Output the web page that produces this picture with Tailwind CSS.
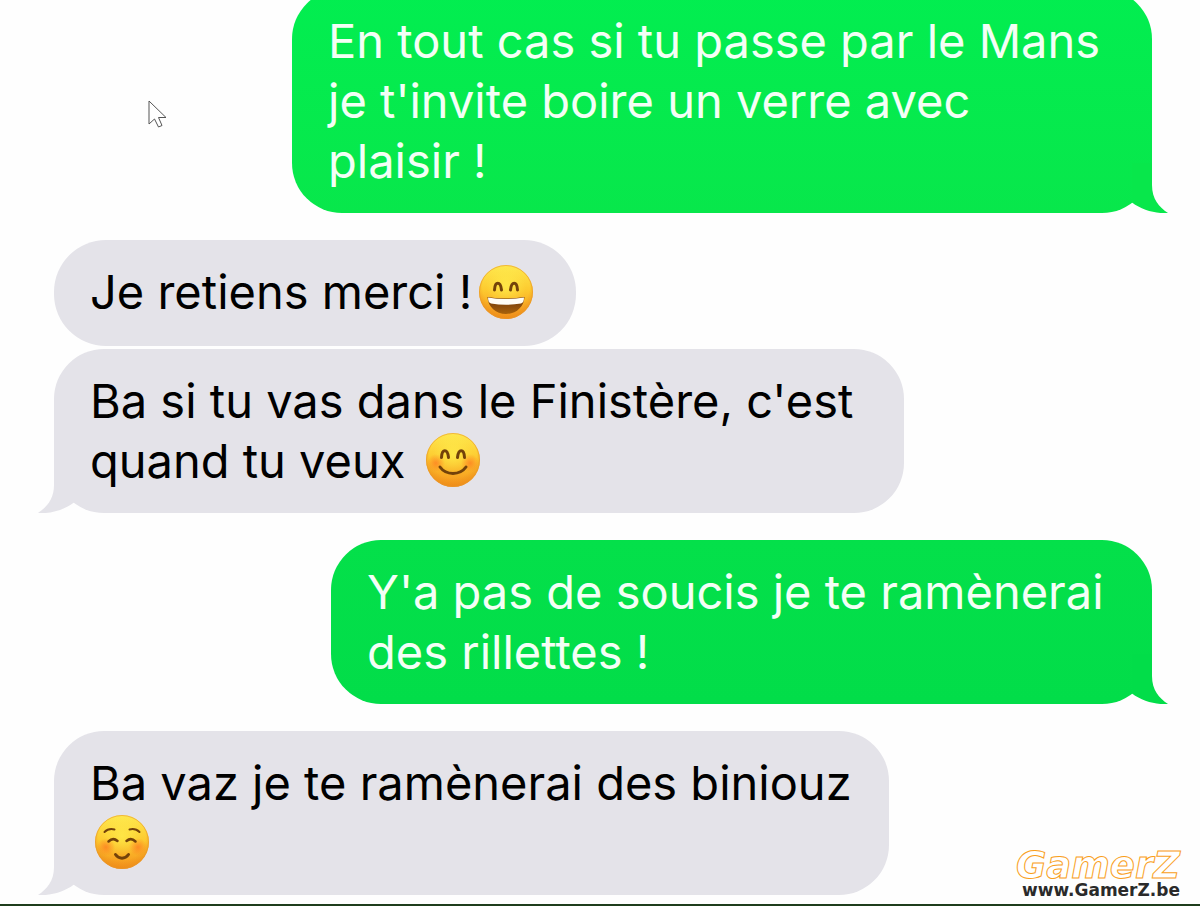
<!DOCTYPE html>
<html lang="fr">
<head>
    <meta charset="UTF-8">
    <meta name="viewport" content="width=device-width, initial-scale=1.0">
    <title>Messages</title>
    <script src="https://cdn.jsdelivr.net/npm/@tailwindcss/browser@4"></script>
</head>
<body class="relative flex flex-col min-h-screen overflow-hidden bg-[#fefefe] font-['Inter',sans-serif]">
    <!-- Dégradés et tracés partagés -->
    <svg class="absolute w-0 h-0" aria-hidden="true">
        <defs>
            <linearGradient id="face" x1="0" y1="0" x2="0" y2="1">
                <stop offset="0" stop-color="#fee94e"/>
                <stop offset="0.45" stop-color="#fdcb30"/>
                <stop offset="1" stop-color="#f5921c"/>
            </linearGradient>
            <radialGradient id="shine" cx="0.5" cy="0.4" r="0.62">
                <stop offset="0" stop-color="#fff04e" stop-opacity="0.7"/>
                <stop offset="0.6" stop-color="#fff04e" stop-opacity="0"/>
                <stop offset="0.7" stop-color="#e98a18" stop-opacity="0"/>
                <stop offset="1" stop-color="#e98a18" stop-opacity="0.7"/>
            </radialGradient>
            <radialGradient id="blush">
                <stop offset="0" stop-color="#ff6b1f" stop-opacity="0.6"/>
                <stop offset="1" stop-color="#ff6b1f" stop-opacity="0"/>
            </radialGradient>
            <linearGradient id="mouth" x1="0" y1="0" x2="0" y2="1">
                <stop offset="0" stop-color="#6b3408"/>
                <stop offset="1" stop-color="#a8620c"/>
            </linearGradient>
            <g id="head">
                <circle cx="28" cy="28" r="27" fill="url(#face)"/>
                <circle cx="28" cy="28" r="27" fill="url(#shine)"/>
                <circle cx="28" cy="28" r="26.5" fill="none" stroke="#e7962c" stroke-opacity="0.6"/>
            </g>
        </defs>
    </svg>

    <!-- Conversation -->
    <main class="flex flex-col -mt-[11px] pl-[54px] pr-12 pb-[9px] text-[47px] leading-[60px] text-black">
        <div class="relative self-end w-[860px] max-w-full px-9 py-[22px] rounded-[50px] bg-linear-to-b from-[#02ee50] to-[#08e74b] text-[#f4fff6]">
            <p>En tout cas si tu passe par le Mans je t'invite boire un verre avec plaisir&nbsp;!</p>
            <svg class="absolute bottom-0 -right-4 w-9 h-[50px] text-[#08e74b]" viewBox="0 0 36 50" fill="currentColor" aria-hidden="true">
                <path d="M0 39.500C10 47 24 51 36 50C27 44 20 36 20 22V0H0Z"/>
            </svg>
        </div>

        <div class="w-[522px] max-w-full mt-[27px] px-9 pt-[22px] pb-6 rounded-[52px] bg-[#e4e3e9]">
            <p>Je retiens merci&nbsp;!<svg class="inline-block align-top mt-[2px] ml-1.5 w-14 h-14" viewBox="0 0 56 56" role="img" aria-label="sourire">
                <use href="#head"/>
                <path d="M16.500 26C17 17 22.500 17 23.500 26M32.500 26C33.500 17 39 17 39.500 26" fill="none" stroke="#73420a" stroke-width="3" stroke-linecap="round"/>
                <path d="M9.500 33Q28 36 46.500 33C46 43 38 50 28 50S10 43 9.500 33Z" fill="url(#mouth)"/>
                <path d="M10 33.500Q28 36.500 46 33.500C46 37 45 39 43 39.500Q28 42 13 39.500C11 39 10 37 10 33.500Z" fill="#fffdf5"/>
            </svg></p>
        </div>

        <div class="relative w-[850px] max-w-full mt-[3px] px-9 py-[22px] rounded-[50px] bg-[#e4e3e9]">
            <p>Ba si tu vas dans le Finistère, c'est quand tu veux <svg class="inline-block align-top mt-[1px] ml-1.5 w-14 h-14" viewBox="0 0 56 56" role="img" aria-label="sourire aux joues roses">
                <use href="#head"/>
                <circle cx="11" cy="31" r="9" fill="url(#blush)"/>
                <circle cx="45" cy="31" r="9" fill="url(#blush)"/>
                <path d="M16.500 25.500C17 16.500 22.500 16.500 23.500 25.500M32.500 25.500C33.500 16.500 39 16.500 39.500 25.500" fill="none" stroke="#73420a" stroke-width="3" stroke-linecap="round"/>
                <path d="M15 35C21 43.500 35 43.500 41 35" fill="none" stroke="#73420a" stroke-width="3" stroke-linecap="round"/>
            </svg></p>
            <svg class="absolute bottom-0 -left-4 w-9 h-[50px] text-[#e4e3e9]" viewBox="0 0 36 50" fill="currentColor" aria-hidden="true">
                <path d="M36 39.500C26 47 12 51 0 50C9 44 16 36 16 22V0H36Z"/>
            </svg>
        </div>

        <div class="relative self-end w-[821px] max-w-full mt-[27px] px-9 py-[22px] rounded-[50px] bg-linear-to-b from-[#04e04a] to-[#02dd49] text-[#f4fff6]">
            <p>Y'a pas de soucis je te ramènerai des rillettes&nbsp;!</p>
            <svg class="absolute bottom-0 -right-4 w-9 h-[50px] text-[#02dd49]" viewBox="0 0 36 50" fill="currentColor" aria-hidden="true">
                <path d="M0 39.500C10 47 24 51 36 50C27 44 20 36 20 22V0H0Z"/>
            </svg>
        </div>

        <div class="relative w-[835px] max-w-full mt-[27px] pl-9 pr-6 py-[22px] rounded-[50px] bg-[#e4e3e9]">
            <p>Ba vaz je te ramènerai des biniouz <svg class="inline-block align-top mt-[1px] ml-1 w-14 h-14" viewBox="0 0 56 56" role="img" aria-label="sourire détendu">
                <use href="#head"/>
                <circle cx="12" cy="33" r="9" fill="url(#blush)"/>
                <circle cx="44" cy="33" r="9" fill="url(#blush)"/>
                <path d="M10.500 18Q14.500 14 20.500 15.500M45.500 18Q41.500 14 35.500 15.500" fill="none" stroke="#73420a" stroke-width="2" stroke-linecap="round"/>
                <path d="M14.500 27.500Q19 23 23.500 27M32.500 27Q37 23 41.500 27.500" fill="none" stroke="#73420a" stroke-width="2.500" stroke-linecap="round"/>
                <path d="M21.500 40.500C25 45.500 31 45.500 34.500 40.500" fill="none" stroke="#73420a" stroke-width="3" stroke-linecap="round"/>
            </svg></p>
            <svg class="absolute bottom-0 -left-4 w-9 h-[50px] text-[#e4e3e9]" viewBox="0 0 36 50" fill="currentColor" aria-hidden="true">
                <path d="M36 39.500C26 47 12 51 0 50C9 44 16 36 16 22V0H36Z"/>
            </svg>
        </div>
    </main>

    <!-- Bord inférieur -->
    <div class="mt-auto h-[2px] bg-[#1e3d1c]"></div>

    <!-- Curseur -->
    <svg class="absolute left-[148px] top-[100px] w-5 h-7" viewBox="0 0 20 28" aria-hidden="true">
        <path d="M1 1V24L6.500 19L10.500 27L14 25.500L10.500 17.500H18Z" fill="#ffffff" stroke="#555555" stroke-width="1"/>
    </svg>

    <!-- Filigrane -->
    <div class="absolute right-5 bottom-[8px] flex flex-col items-end font-['DejaVu_Sans',sans-serif]">
        <span class="text-[37px] leading-[32px] font-bold italic text-white [-webkit-text-stroke:1px_#f9a01b]">GamerZ</span>
        <span class="text-[17px] leading-[16px] font-bold text-[#2a2a2a]">www.GamerZ.be</span>
    </div>
</body>
</html>
